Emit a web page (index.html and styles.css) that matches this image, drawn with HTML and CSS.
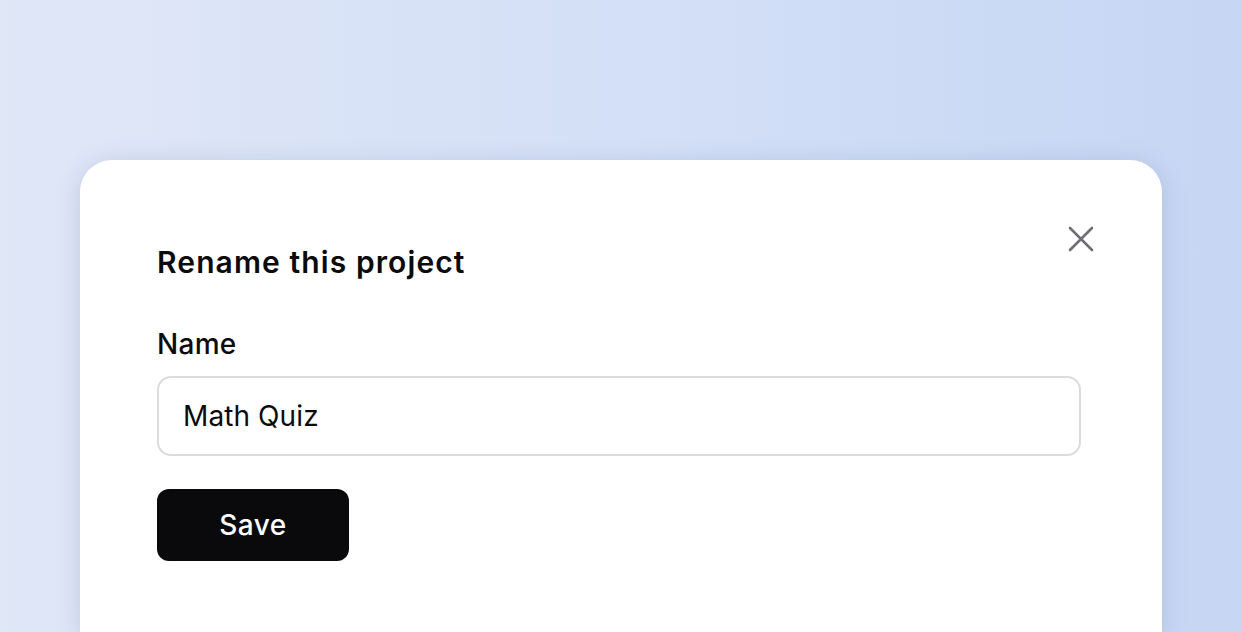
FILE: index.html
```html
<!DOCTYPE html>
<html lang="en">
<head>
<meta charset="utf-8">
<title>Rename this project</title>
<link rel="stylesheet" href="styles.css">
</head>
<body>
<div class="stage">
  <div class="card">
    <button class="close" aria-label="Close">
      <svg width="28" height="28" viewBox="0 0 28 28"><path d="M3 3L25 25M25 3L3 25" stroke="#6e6e76" stroke-width="2.6" stroke-linecap="round" fill="none"/></svg>
    </button>
    <h1 class="title">Rename this project</h1>
    <label class="label" for="name">Name</label>
    <div class="input" id="name">Math Quiz</div>
    <button class="save">Save</button>
  </div>
</div>
</body>
</html>
```

FILE: styles.css
```css
html, body {
  margin: 0;
  height: 100%;
}
body {
  font-family: Inter, "Noto Sans", sans-serif;
  background: linear-gradient(90deg, #e0e7f7 0%, #d4e0f7 50%, #c6d6f3 100%);
  overflow: hidden;
}
.stage {
  height: 100vh;
  box-sizing: border-box;
  overflow: hidden;
  padding: 160px 80px 0 80px;
}
.card {
  position: relative;
  background: #ffffff;
  border-radius: 32px 32px 0 0;
  box-shadow: 0 4px 24px rgba(80, 100, 150, 0.22);
  padding: 82px 81px 0 77px;
  height: 100%;
  box-sizing: border-box;
}
.close {
  position: absolute;
  right: 67px;
  top: 65px;
  background: none;
  border: none;
  padding: 0;
  width: 28px;
  height: 28px;
  cursor: pointer;
}
.title {
  margin: 0;
  font-size: 30px;
  font-weight: 600;
  color: #0b0b0d;
  line-height: 40px;
  letter-spacing: 1.1px;
}
.label {
  display: block;
  margin-top: 44px;
  font-size: 28px;
  font-weight: 500;
  color: #0b0b0d;
  line-height: 36px;
  letter-spacing: 0.3px;
}
.input {
  margin-top: 14px;
  height: 80px;
  box-sizing: border-box;
  border: 2px solid #dcdcdf;
  border-radius: 14px;
  padding: 0 24px;
  display: flex;
  align-items: center;
  font-size: 28px;
  color: #0b0b0d;
  letter-spacing: 0.1px;
}
.save {
  margin-top: 33px;
  width: 192px;
  height: 72px;
  border: none;
  border-radius: 12px;
  background: #0a0a0c;
  color: #ffffff;
  font-family: inherit;
  font-size: 28px;
  font-weight: 500;
  letter-spacing: 0.5px;
  cursor: pointer;
}
```
